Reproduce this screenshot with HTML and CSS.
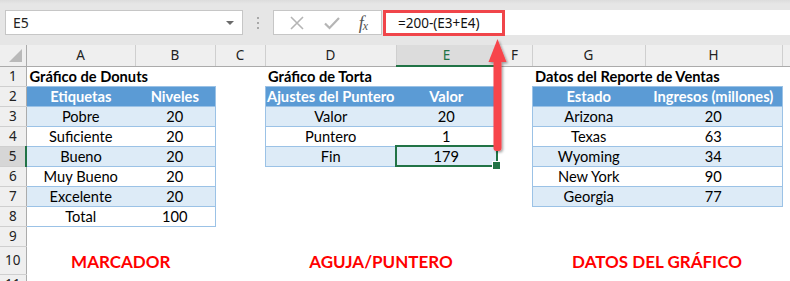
FILE: index.html
```html
<!DOCTYPE html>
<html lang="es">
<head>
<meta charset="utf-8">
<title>Hoja</title>
<link rel="stylesheet" href="styles.css">
</head>
<body>
<div class="app">
  <div class="fbar">
    <div class="namebox"><span class="ref">E5</span><span class="dd"></span></div>
    <div class="grip"><i></i><i></i><i></i></div>
    <div class="fbtns">
      <svg class="ic" width="16" height="16" viewBox="0 0 16 16"><path d="M2 2 L14 14 M14 2 L2 14" stroke="#b5b5b5" stroke-width="1.6" fill="none"/></svg>
      <svg class="ic" width="18" height="16" viewBox="0 0 18 16"><path d="M2 8.5 L6.5 13 L16 3" stroke="#b5b5b5" stroke-width="2.2" fill="none"/></svg>
      <span class="fx"><i>f</i><sub>x</sub></span>
    </div>
    <div class="finput"><span class="formula">=200-(E3+E4)</span></div>
  </div>

  <table class="sheet">
    <colgroup>
      <col class="c-rh"><col class="c-a"><col class="c-b"><col class="c-c"><col class="c-d"><col class="c-e"><col class="c-f"><col class="c-g"><col class="c-h"><col class="c-i">
    </colgroup>
    <thead>
      <tr>
        <th class="corner"><svg width="26" height="20" viewBox="0 0 26 20"><polygon points="22,4 22,17 9,17" fill="#b9b9b9"/></svg></th>
        <th>A</th><th>B</th><th>C</th><th>D</th><th class="selcol">E</th><th>F</th><th>G</th><th>H</th><th></th>
      </tr>
    </thead>
    <tbody>
      <tr>
        <th class="rh">1</th>
        <td class="title">Gráfico de Donuts</td><td></td><td></td>
        <td class="title">Gráfico de Torta</td><td></td><td></td>
        <td class="title">Datos del Reporte de Ventas</td><td></td><td></td>
      </tr>
      <tr>
        <th class="rh">2</th>
        <td class="hd bl">Etiquetas</td><td class="hd br">Niveles</td><td></td>
        <td class="hd bl">Ajustes del Puntero</td><td class="hd br">Valor</td><td></td>
        <td class="hd bl">Estado</td><td class="hd br">Ingresos (millones)</td><td></td>
      </tr>
      <tr>
        <th class="rh">3</th>
        <td class="lt bl">Pobre</td><td class="lt br">20</td><td></td>
        <td class="lt bl">Valor</td><td class="lt br">20</td><td></td>
        <td class="lt bl">Arizona</td><td class="lt br">20</td><td></td>
      </tr>
      <tr>
        <th class="rh">4</th>
        <td class="wt bl">Suficiente</td><td class="wt br">20</td><td></td>
        <td class="wt bl">Puntero</td><td class="wt br">1</td><td></td>
        <td class="wt bl">Texas</td><td class="wt br">63</td><td></td>
      </tr>
      <tr>
        <th class="rh selrow">5</th>
        <td class="lt bl">Bueno</td><td class="lt br">20</td><td></td>
        <td class="lt bl">Fin</td><td class="lt br sel">179</td><td></td>
        <td class="lt bl">Wyoming</td><td class="lt br">34</td><td></td>
      </tr>
      <tr>
        <th class="rh">6</th>
        <td class="wt bl">Muy Bueno</td><td class="wt br">20</td><td></td>
        <td></td><td></td><td></td>
        <td class="wt bl">New York</td><td class="wt br">90</td><td></td>
      </tr>
      <tr>
        <th class="rh">7</th>
        <td class="lt bl">Excelente</td><td class="lt br">20</td><td></td>
        <td></td><td></td><td></td>
        <td class="lt bl">Georgia</td><td class="lt br">77</td><td></td>
      </tr>
      <tr>
        <th class="rh">8</th>
        <td class="wt bl">Total</td><td class="wt br">100</td><td></td>
        <td></td><td></td><td></td><td></td><td></td><td></td>
      </tr>
      <tr>
        <th class="rh">9</th>
        <td></td><td></td><td></td><td></td><td></td><td></td><td></td><td></td><td></td>
      </tr>
      <tr class="tall">
        <th class="rh">10</th>
        <td class="lbl" colspan="2">MARCADOR</td><td></td>
        <td class="lbl" colspan="2">AGUJA/PUNTERO</td><td></td>
        <td class="lbl" colspan="2">DATOS DEL GRÁFICO</td><td></td>
      </tr>
      <tr>
        <th class="rh">11</th>
        <td></td><td></td><td></td><td></td><td></td><td></td><td></td><td></td><td></td>
      </tr>
    </tbody>
  </table>

  <svg class="arrow" width="26" height="120" viewBox="0 0 26 120">
    <defs>
      <filter id="sh" x="-50%" y="-20%" width="200%" height="140%">
        <feDropShadow dx="1.5" dy="1.5" stdDeviation="1.2" flood-color="#000" flood-opacity="0.35"/>
      </filter>
    </defs>
    <g filter="url(#sh)" fill="#f7454b">
      <polygon points="11.5,2 20.5,25 2.5,25"/>
      <rect x="7.5" y="22" width="8" height="92" rx="3"/>
    </g>
  </svg>
</div>
</body>
</html>
```

FILE: styles.css
```css
* { box-sizing: border-box; }
html, body { margin: 0; padding: 0; background: #fff; }
.app { position: relative; width: 790px; height: 281px; overflow: hidden; }

/* formula bar */
.fbar {
  height: 45px;
  background: linear-gradient(#dcdcdc 0, #e6e6e6 4px, #e6e6e6 100%);
  display: flex;
  align-items: flex-start;
  padding: 10px 0 0 5px;
  font-family: "Noto Sans", "Open Sans", sans-serif;
}
.namebox {
  width: 238px;
  height: 25px;
  background: #fff;
  border: 1px solid #c6c6c6;
  display: flex;
  align-items: center;
  justify-content: space-between;
  padding: 0 8px 0 7px;
  font-size: 14px;
  color: #222;
}
.dd {
  width: 0; height: 0;
  border-left: 4px solid transparent;
  border-right: 4px solid transparent;
  border-top: 4px solid #6a6a6a;
}
.grip {
  width: 30px;
  height: 25px;
  display: flex;
  flex-direction: column;
  align-items: center;
  justify-content: center;
  gap: 3px;
}
.grip i { width: 2px; height: 2px; background: #a8a8a8; display: block; }
.fbtns {
  width: 109px;
  height: 25px;
  background: #fff;
  border: 1px solid #c6c6c6;
  display: flex;
  align-items: center;
  justify-content: space-around;
  padding: 0 4px 0 6px;
}
.ic { display: block; }
.fx {
  font-family: "Liberation Serif", serif;
  font-style: italic;
  color: #555;
  font-size: 18px;
  line-height: 1;
}
.fx i { font-style: italic; }
.fx sub { font-size: 12px; vertical-align: baseline; position: relative; top: 1px; margin-left: -1px; }
.finput {
  flex: 1;
  height: 25px;
  margin-left: 1px;
  background: #fff;
  position: relative;
}
.formula {
  position: absolute;
  left: 0; top: 0;
  width: 122px;
  height: 26px;
  border: 3px solid #f0454a;
  padding-left: 12px;
  font-size: 13.5px;
  line-height: 20px;
  color: #111;
}

/* sheet */
.sheet {
  border-collapse: collapse;
  table-layout: fixed;
  width: 790px;
  font-family: Lato, "Liberation Sans", sans-serif;
  font-size: 14.67px;
  color: #000;
}
.c-rh { width: 26px; }
.c-a { width: 109px; }
.c-b { width: 80px; }
.c-c { width: 50px; }
.c-d { width: 131px; }
.c-e { width: 101px; }
.c-f { width: 35px; }
.c-g { width: 113px; }
.c-h { width: 137px; }
.c-i { width: 8px; }

.sheet tr { height: 20px; }
.sheet tr.tall { height: 28px; }
.sheet td, .sheet th {
  padding: 0;
  white-space: nowrap;
  line-height: 19px;
  text-align: center;
  vertical-align: middle;
}
.sheet thead th {
  height: 20px;
  background: #efefef;
  border-right: 1px solid #cfcfcf;
  border-bottom: 1px solid #ababab;
  font-family: "Noto Sans", "Open Sans", sans-serif;
  font-weight: normal;
  font-size: 13.5px;
  color: #222;
  padding-top: 1px;
}
.sheet thead th.corner { padding: 0; border-right: 1px solid #ababab; }
.corner svg { display: block; }
.sheet thead th.selcol {
  background: #dcdcdc;
  color: #217346;
  border-bottom: 2px solid #217346;
}
.sheet th.rh {
  background: #efefef;
  border-right: 1px solid #ababab;
  border-bottom: 1px solid #cfcfcf;
  font-family: "Noto Sans", "Open Sans", sans-serif;
  font-weight: normal;
  font-size: 13.5px;
  color: #222;
}
.sheet th.selrow {
  background: #d6d6d6;
  border-right: 2px solid #217346;
}

.sheet td.title {
  text-align: left;
  font-weight: bold;
  padding-left: 3px;
  overflow: visible;
}
.hd {
  background: #5b9bd5;
  color: #fff;
  font-weight: bold;
  border-top: 1px solid #9bc2e6;
  border-bottom: 1px solid #9bc2e6;
}
.lt {
  background: #ddebf7;
  border-bottom: 1px solid #9bc2e6;
}
.wt {
  background: #fff;
  border-bottom: 1px solid #9bc2e6;
}
.bl { border-left: 1px solid #9bc2e6; }
.br { border-right: 1px solid #9bc2e6; }

.sel {
  position: relative;
  outline: 2px solid #217346;
  outline-offset: -1px;
}
.sel::after {
  content: "";
  position: absolute;
  right: -4px;
  bottom: -4px;
  width: 7px;
  height: 7px;
  background: #217346;
  border: 1px solid #fff;
}

.sheet td.lbl {
  color: #ff0000;
  font-weight: bold;
  font-size: 17px;
  padding-top: 2px;
}

.arrow {
  position: absolute;
  left: 486px;
  top: 37px;
}
```
